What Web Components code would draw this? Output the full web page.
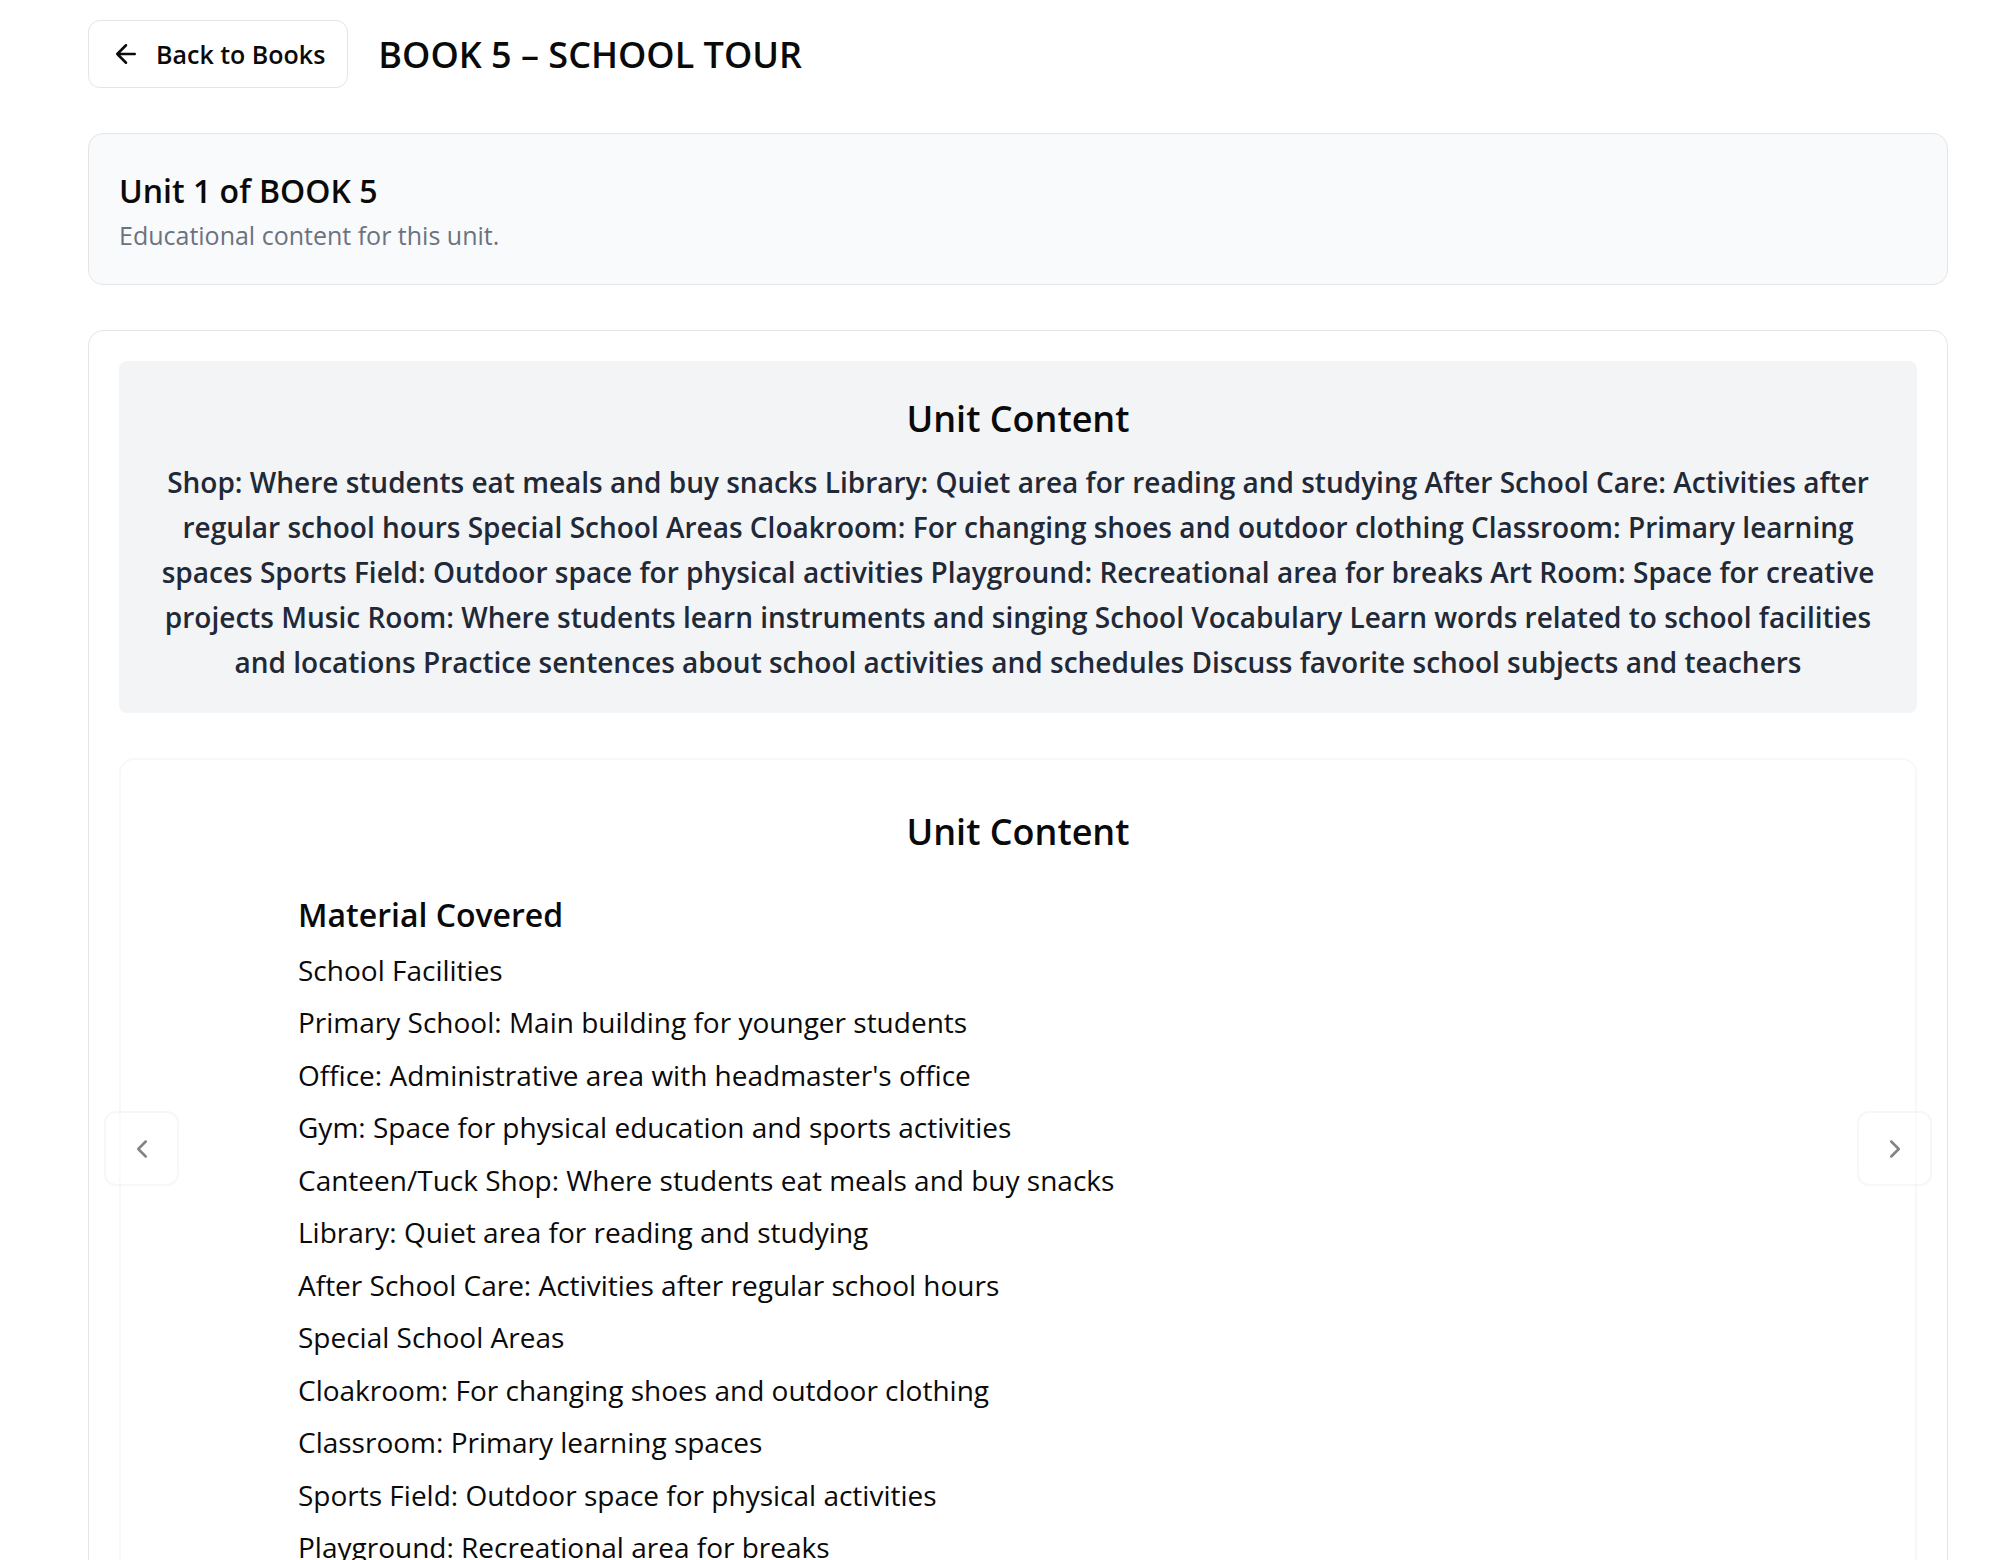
<!DOCTYPE html>
<html lang="en">
<head>
<meta charset="utf-8">
<title>Book 5 – School Tour</title>
<style>
  html, body { margin: 0; height: 100%; }
  body { background: #fff; color: #0a0a0a; font-family: "Segoe UI", "Open Sans", "Noto Sans", sans-serif; overflow: hidden; }
</style>
</head>
<body>
<unit-page></unit-page>

<script>
const define = (name, html) => {
  const template = document.createElement('template');
  template.innerHTML = html;
  customElements.define(name, class extends HTMLElement {
    constructor() {
      super();
      this.attachShadow({ mode: 'open' }).append(template.content.cloneNode(true));
    }
  });
};

define('back-button', `
  <style>
    :host { display: block; flex: none; }
    button { display: flex; align-items: center; gap: 15px; height: 68px; padding: 0 22px; border: 1px solid #e5e5e5; border-radius: 12px; background: #fff; color: inherit; font: 600 25px/38px "Segoe UI", "Open Sans", "Noto Sans", sans-serif; cursor: pointer; }
    svg { display: block; width: 30px; height: 30px; }
  </style>
  <button type="button">
    <svg viewBox="0 0 24 24" fill="none" stroke="currentColor" stroke-width="2" stroke-linecap="round" stroke-linejoin="round" aria-hidden="true"><path d="m12 19-7-7 7-7M19 12H5"/></svg>
    <slot></slot>
  </button>`);

define('page-header', `
  <style>
    :host { display: flex; align-items: center; gap: 30px; }
    h1 { margin: 0; font-size: 36px; line-height: 53px; font-weight: 600; }
  </style>
  <back-button>Back to Books</back-button>
  <h1><slot></slot></h1>`);

define('unit-summary', `
  <style>
    :host { display: block; padding: 30px; border: 1px solid #e5e5e5; border-radius: 15px; background: #f9fafb; }
    h2 { margin: 0; font-size: 32px; line-height: 53px; font-weight: 600; }
    p { margin: 0; color: #6b7280; font-size: 25px; line-height: 37px; }
  </style>
  <h2><slot name="title"></slot></h2>
  <p><slot></slot></p>`);

define('unit-card', `
  <style>
    :host { display: flex; flex-direction: column; gap: 45px; padding: 30px; border: 1px solid #e5e5e5; border-radius: 15px; }
  </style>
  <slot></slot>`);

define('content-banner', `
  <style>
    :host { display: block; padding: 31px 30px 28px; border-radius: 8px; background: #f3f4f6; text-align: center; }
    h2 { margin: 0 0 15px; font-size: 36px; line-height: 53px; font-weight: 600; }
    p { margin: 0; color: #1f2937; font-size: 28px; line-height: 45px; font-weight: 600; }
  </style>
  <h2><slot name="title"></slot></h2>
  <p><slot></slot></p>`);

define('slide-button', `
  <style>
    :host { display: block; opacity: .5; }
    button { display: grid; place-items: center; width: 75px; height: 75px; padding: 0; border: 2px solid #f0f0f0; border-radius: 12px; background: #fff; color: #0a0a0a; }
    svg { display: block; width: 30px; height: 30px; }
    :host([direction="next"]) svg { transform: scaleX(-1); }
  </style>
  <button type="button" disabled aria-label="Change slide">
    <svg viewBox="0 0 24 24" fill="none" stroke="currentColor" stroke-width="2" stroke-linecap="round" stroke-linejoin="round" aria-hidden="true"><path d="m15 18-6-6 6-6"/></svg>
  </button>`);

define('content-slide', `
  <style>
    :host { display: block; padding: 45px; border: 2px solid #f8f8f8; border-radius: 15px; }
    h2 { margin: 0 0 30px; text-align: center; font-size: 36px; line-height: 53px; font-weight: 600; }
    section { max-width: 1440px; margin: 0 auto; }
    h3 { margin: 0 0 3px; font-size: 32px; line-height: 53px; font-weight: 600; }
    div { display: grid; grid-auto-rows: 52px 53px; align-items: center; font-size: 28px; line-height: 45px; }
    ::slotted(p) { margin: 0; }
  </style>
  <h2><slot name="title"></slot></h2>
  <section>
    <h3><slot name="subtitle"></slot></h3>
    <div><slot></slot></div>
  </section>`);

define('content-carousel', `
  <style>
    :host { display: block; position: relative; }
    slide-button { position: absolute; top: 353px; }
    slide-button[direction="previous"] { left: -15px; }
    slide-button[direction="next"] { right: -15px; }
  </style>
  <slot></slot>
  <slide-button direction="previous"></slide-button>
  <slide-button direction="next"></slide-button>`);

define('unit-page', `
  <style>
    :host { display: flex; flex-direction: column; gap: 45px; padding: 20px 41px 45px 88px; }
    p { margin: 0; }
  </style>
  <page-header>BOOK 5 – SCHOOL TOUR</page-header>
  <unit-summary><span slot="title">Unit 1 of BOOK 5</span>Educational content for this unit.</unit-summary>
  <unit-card>
    <content-banner><span slot="title">Unit Content</span>Shop: Where students eat meals and buy snacks Library: Quiet area for reading and studying After School Care: Activities after regular school hours Special School Areas Cloakroom: For changing shoes and outdoor clothing Classroom: Primary learning spaces Sports Field: Outdoor space for physical activities Playground: Recreational area for breaks Art Room: Space for creative projects Music Room: Where students learn instruments and singing School Vocabulary Learn words related to school facilities and locations Practice sentences about school activities and schedules Discuss favorite school subjects and teachers</content-banner>
    <content-carousel>
      <content-slide>
        <span slot="title">Unit Content</span>
        <span slot="subtitle">Material Covered</span>
        <p>School Facilities</p>
        <p>Primary School: Main building for younger students</p>
        <p>Office: Administrative area with headmaster's office</p>
        <p>Gym: Space for physical education and sports activities</p>
        <p>Canteen/Tuck Shop: Where students eat meals and buy snacks</p>
        <p>Library: Quiet area for reading and studying</p>
        <p>After School Care: Activities after regular school hours</p>
        <p>Special School Areas</p>
        <p>Cloakroom: For changing shoes and outdoor clothing</p>
        <p>Classroom: Primary learning spaces</p>
        <p>Sports Field: Outdoor space for physical activities</p>
        <p>Playground: Recreational area for breaks</p>
      </content-slide>
    </content-carousel>
  </unit-card>`);
</script>
</body>
</html>
